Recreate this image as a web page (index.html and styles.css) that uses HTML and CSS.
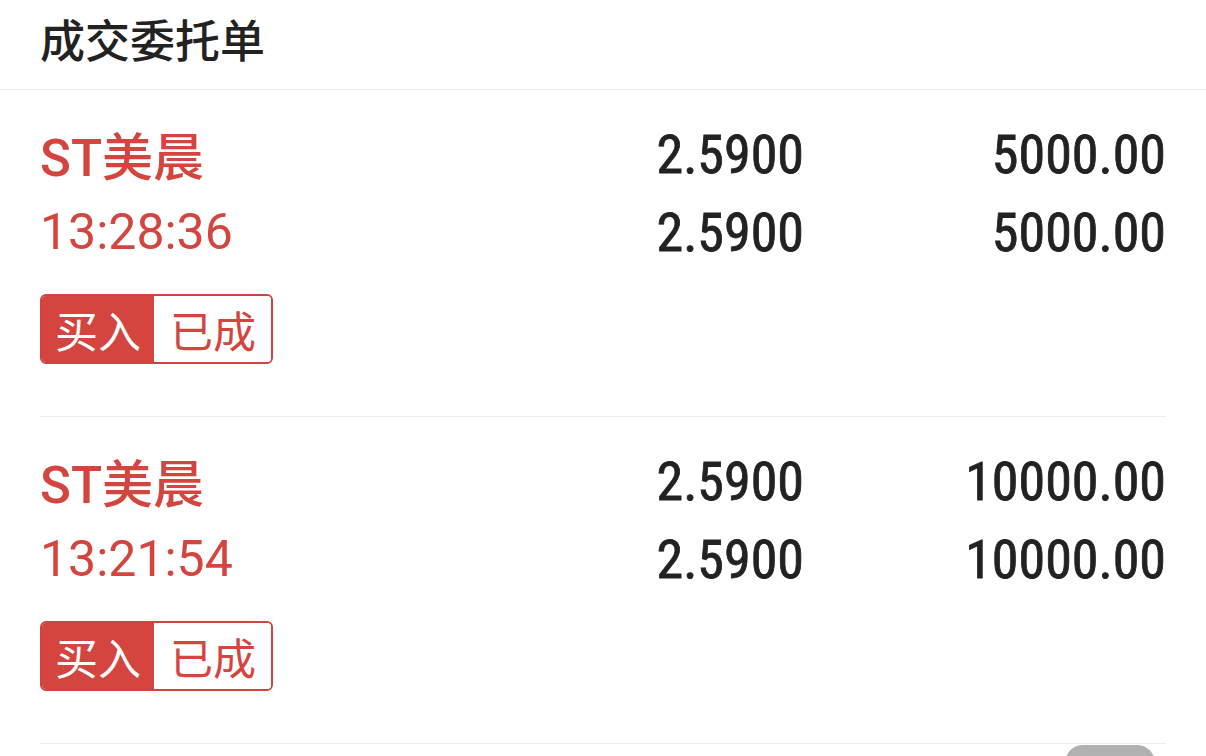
FILE: index.html
```html
<!DOCTYPE html>
<html lang="zh-CN">
<head>
<meta charset="utf-8">
<title>成交委托单</title>
<link rel="stylesheet" href="styles.css">
</head>
<body>
<div class="page">
  <header class="header">
    <h1 class="title">成交委托单</h1>
  </header>
  <section class="list">
    <div class="order">
      <div class="grid">
        <div class="name">ST美晨</div>
        <div class="num">2.5900</div>
        <div class="num">5000.00</div>
        <div class="time">13:28:36</div>
        <div class="num">2.5900</div>
        <div class="num">5000.00</div>
      </div>
      <div class="badge"><span class="badge-side">买入</span><span class="badge-state">已成</span></div>
    </div>
    <div class="order">
      <div class="grid">
        <div class="name">ST美晨</div>
        <div class="num">2.5900</div>
        <div class="num">10000.00</div>
        <div class="time">13:21:54</div>
        <div class="num">2.5900</div>
        <div class="num">10000.00</div>
      </div>
      <div class="badge"><span class="badge-side">买入</span><span class="badge-state">已成</span></div>
    </div>
  </section>
  <div class="float-tab"></div>
</div>
</body>
</html>
```

FILE: styles.css
```css
html, body {
  margin: 0;
  padding: 0;
  background: #ffffff;
}
body {
  font-family: Roboto, "Noto Sans CJK SC", sans-serif;
  color: #222222;
  overflow: hidden;
}
.page {
  position: relative;
  width: 1206px;
  height: 756px;
  overflow: hidden;
}
.header {
  height: 90px;
  box-sizing: border-box;
  padding: 13px 40px 0;
  border-bottom: 1px solid #ececec;
}
.title {
  margin: 0;
  font-size: 45px;
  line-height: 52px;
  font-weight: 500;
  color: #222222;
  font-family: "Noto Sans CJK SC", sans-serif;
}
.list {
  margin: 0 40px;
}
.order {
  padding: 25px 0 52px;
  border-bottom: 1px solid #ececec;
}
.grid {
  display: grid;
  grid-template-columns: 1fr 260px 362px;
  grid-auto-rows: 78px;
  align-items: center;
}
.name {
  font-size: 51px;
  font-weight: 500;
  color: #d4453f;
  font-family: Roboto, "Noto Sans CJK SC", sans-serif;
}
.time {
  font-size: 50px;
  font-weight: 400;
  color: #d4453f;
  font-family: Roboto, sans-serif;
}
.num {
  text-align: right;
  font-family: "Roboto Condensed", Roboto, sans-serif;
  font-size: 54px;
  font-weight: 400;
  -webkit-text-stroke: 0.8px #222222;
  color: #222222;
}
.badge {
  display: inline-flex;
  margin-top: 23px;
  height: 70px;
  box-sizing: border-box;
  border: 2px solid #cf4440;
  border-radius: 6px;
  overflow: hidden;
  font-family: "Noto Sans CJK SC", sans-serif;
  font-size: 43px;
  line-height: 66px;
}
.badge-side {
  background: #d4453f;
  color: #ffffff;
  padding: 0 13px;
}
.badge-state {
  background: #ffffff;
  color: #d4453f;
  padding: 0 15px 0 16px;
}
.float-tab {
  position: absolute;
  left: 1065px;
  top: 745px;
  width: 90px;
  height: 40px;
  border-radius: 18px;
  background: #b1b1b1;
}
```
